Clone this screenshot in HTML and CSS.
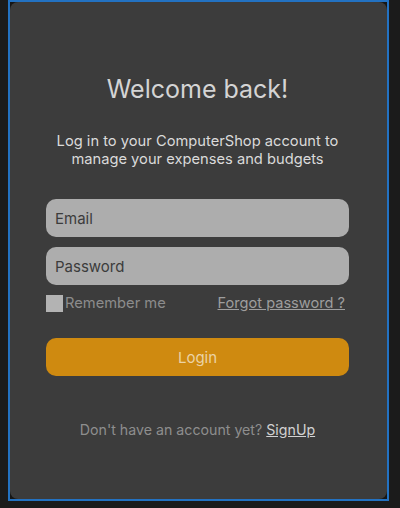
FILE: index.html
```html
<!DOCTYPE html>
<html>
<head>
<meta charset="utf-8">
<link rel="stylesheet" href="styles.css">
</head>
<body>
<div class="frame">
  <div class="card">
    <h1 class="title">Welcome back!</h1>
    <p class="subtitle">Log in to your ComputerShop account to<br>manage your expenses and budgets</p>
    <form class="form">
      <input class="field" type="text" placeholder="Email">
      <input class="field" type="password" placeholder="Password">
      <div class="row">
        <label class="remember"><span class="box"></span>Remember me</label>
        <a class="forgot" href="#">Forgot password ?</a>
      </div>
      <button class="login" type="button">Login</button>
    </form>
    <p class="signup">Don't have an account yet? <a href="#">SignUp</a></p>
  </div>
</div>
</body>
</html>
```
FILE: styles.css
```css
html, body {
  margin: 0;
  padding: 0;
  background: #1b1b1b;
  width: 400px;
  height: 508px;
  overflow: hidden;
}
body {
  font-family: Inter, "Noto Sans", sans-serif;
  padding-left: 8px;
}
.frame {
  box-sizing: border-box;
  width: 381px;
  height: 501px;
  border: 2px solid #2372c2;
  background: #161616;
}
.card {
  box-sizing: border-box;
  height: 100%;
  background: #3c3c3c;
  border-radius: 8px;
  padding: 72px 38px 0 36px;
  display: flex;
  flex-direction: column;
  align-items: stretch;
}
.title {
  margin: 0;
  font-size: 25px;
  font-weight: 400;
  color: #d4d4d4;
  text-align: center;
  line-height: 30px;
}
.subtitle {
  margin: 28px 0 0;
  font-size: 14.7px;
  line-height: 18px;
  color: #dadada;
  text-align: center;
}
.form {
  margin-top: 31px;
  display: flex;
  flex-direction: column;
}
.field {
  box-sizing: border-box;
  height: 38px;
  border: none;
  border-radius: 10px;
  background: #adadad;
  font-family: inherit;
  font-size: 15px;
  padding: 0 9px;
  color: #333;
  outline: none;
  margin-bottom: 10px;
}
.field::placeholder {
  color: #3c3c3c;
}
.row {
  display: flex;
  justify-content: space-between;
  align-items: center;
  height: 18px;
  margin-top: -1px;
  padding-right: 4px;
}
.remember {
  display: flex;
  align-items: center;
  font-size: 14.7px;
  color: #8c8c8c;
}
.box {
  width: 17px;
  height: 17px;
  background: #b3b3b3;
  margin-right: 2px;
}
.forgot {
  font-size: 14.6px;
  color: #9e9e9e;
  text-decoration: underline;
}
.login {
  margin-top: 26px;
  height: 38px;
  border: none;
  border-radius: 10px;
  background: #cf8a10;
  color: #ebd3a6;
  font-family: inherit;
  font-size: 15px;
}
.signup {
  margin: 45px 0 0;
  text-align: center;
  font-size: 14.2px;
  color: #8e8e8e;
}
.signup a {
  color: #d2d2d2;
  text-decoration: underline;
}
```
